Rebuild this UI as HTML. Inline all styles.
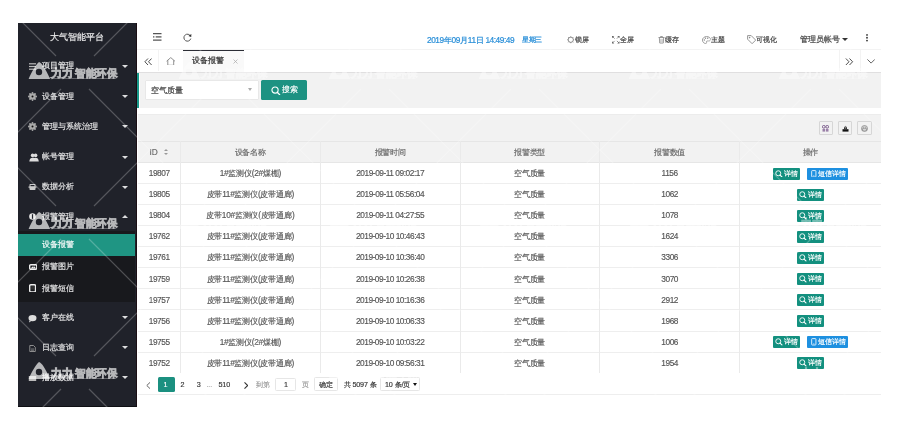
<!DOCTYPE html>
<html><head><meta charset="utf-8">
<style>
*{margin:0;padding:0;box-sizing:border-box}
html,body{width:900px;height:426px;overflow:hidden;background:#fff;font-family:"Liberation Sans",sans-serif;position:relative}
.a{position:absolute}
svg{display:block}
.side{left:18px;top:23px;width:118.5px;height:383.5px;background:#20222a;border-right:1.7px solid #1a0e14;border-bottom:1px solid #0e0f13;overflow:hidden}
.title{left:0;top:7px;width:117px;text-align:center;color:rgba(255,255,255,.85);font-size:8.6px;line-height:14px}
.mi{left:0;width:117px;height:30px;color:rgba(255,255,255,.8);font-size:7.5px;line-height:30px}
.mi .t,.ci .t{position:absolute;left:24px;top:0}
.sico{position:absolute;left:10px;width:9px;height:9px}
.tri{position:absolute;left:104px;top:13.5px;width:0;height:0;border-left:3.6px solid transparent;border-right:3.6px solid transparent;border-top:3.6px solid rgba(255,255,255,.85)}
.tri.up{border-top:0;border-bottom:3.6px solid rgba(255,255,255,.85);top:13px}
.child{left:0;top:208px;width:117px;height:70.5px;background:#18191d}
.ci{left:0;width:117px;height:22px;color:rgba(255,255,255,.8);font-size:7.5px;line-height:22px}
.ci.act{background:#1f9583;color:rgba(255,255,255,.92)}
.hdr{left:137px;top:23px;width:744px;height:26.5px;background:#fff;border-bottom:1px solid #f3f3f3}
.htxt{font-size:7.2px;color:#4a4a4a;line-height:12px;top:33.8px;white-space:nowrap}
.hic{position:absolute;top:35px;width:8px;height:8px}
.tabs{left:137px;top:49.5px;width:744px;height:23.5px;background:#fff;border-bottom:1px solid #e0dfe0}
.tdiv{position:absolute;top:50px;width:1px;height:21px;background:#f3f3f3}
.grey{left:140px;top:73px;width:741px;height:35px;background:#f2f2f2}
.gbar{left:136.5px;top:72.6px;width:2.5px;height:35.4px;background:#18998a}
.inp{left:145px;top:80.2px;width:114px;height:20px;background:#fff;border:1px solid #e8e8e8;border-radius:1px}
.btn{left:261.3px;top:80.2px;width:45.7px;height:20px;background:#1d9282;border-radius:1.5px;color:#fff;font-size:7.5px;line-height:20px}
.tool{left:138px;top:114px;width:743px;height:28px;background:#f2f2f2;border-top:1px solid #ececec;border-bottom:1px solid #e6e6e6}
.tb{position:absolute;top:121.2px;width:14.2px;height:14.3px;border:1px solid #d6d6d6;border-radius:1px;background:#f2f2f2}
.tb svg{position:absolute;left:2.6px;top:2.6px;width:7px;height:7px}
.thead{left:138px;top:142px;width:743px;height:21px;background:#f2f2f2;border-bottom:1px solid #e6e6e6}
.row{left:138px;width:743px;height:21.1px;border-bottom:1px solid #eee;background:#fff}
.cell{position:absolute;top:0;height:100%;text-align:center;font-size:7.5px;letter-spacing:-0.2px;color:#555;line-height:21px;white-space:nowrap}
.hcell{color:#666}
.vl{position:absolute;top:0;width:1px;height:100%;background:#e9e9e9}
.sort{display:inline-block;width:5px;height:6.2px;vertical-align:middle;position:relative;top:-0.8px;margin-left:4px}
.sort:before{content:"";position:absolute;left:0.5px;top:0;border-left:2px solid transparent;border-right:2px solid transparent;border-bottom:2.7px solid #999}
.sort:after{content:"";position:absolute;left:0.5px;bottom:0;border-left:2px solid transparent;border-right:2px solid transparent;border-top:2.7px solid #999}
.pag{left:138px;top:373.1px;width:743px;height:22.4px;border-bottom:1px solid #eee;background:#fff}
.ptxt{position:absolute;font-size:7.2px;letter-spacing:-0.15px;color:#333;line-height:14px;top:378.2px;white-space:nowrap}
.pbox{position:absolute;border:1px solid #e6e6e6;border-radius:1.5px;background:#fff}
.og{display:inline-block;position:relative;height:12px;line-height:12px;background:#13907f;color:#fff;font-size:6.6px;border-radius:1px;padding:0 2.5px 0 11px;vertical-align:middle;top:-0.5px}
.og .sic{position:absolute;left:2.2px;top:2px;width:7.6px;height:7.6px}
.ob{background:#1e90e0}
.wm{left:0;top:0;width:900px;height:426px;pointer-events:none}
.row{border-bottom:0}
.hl{left:138px;width:743px;height:1px;background:#eeeeee}
.cl{top:141px;width:1px;height:232.5px;background:#eaeaea}
.mi,.ci,.title{-webkit-text-stroke:0.2px currentColor}
.btn,.og,.cell,.ptxt{-webkit-text-stroke:0.15px currentColor}
.htxt{-webkit-text-stroke:0.22px currentColor}
.wrap{position:absolute;left:0;top:0;width:900px;height:426px;will-change:transform;transform:translateZ(0);}
.num{font-size:8.3px;letter-spacing:-0.45px}
.num2{font-size:8.3px;letter-spacing:-0.3px}
.hn{font-size:8.3px;letter-spacing:-0.45px}

</style></head><body><div class="wrap">
<!-- sidebar -->
<div class="a side">
  <div class="a title">大气智能平台</div>
  <div class="a mi" style="top:28px"><svg class="sico" style="top:11px" viewBox="0 0 9 9"><rect x="1" y="1.2" width="7" height="1.2" fill="#bbb"/><rect x="1" y="3.9" width="7" height="1.2" fill="#bbb"/><rect x="1" y="6.6" width="7" height="1.2" fill="#bbb"/></svg><span class="t">项目管理</span><span class="tri"></span></div>
  <div class="a mi" style="top:58.8px"><svg class="sico" style="top:10.7px" viewBox="0 0 9 9"><g fill="#aaa"><circle cx="4.5" cy="4.5" r="3.3"/><circle cx="4.5" cy="0.9" r="0.9"/><circle cx="4.5" cy="8.1" r="0.9"/><circle cx="0.9" cy="4.5" r="0.9"/><circle cx="8.1" cy="4.5" r="0.9"/><circle cx="2" cy="2" r="0.9"/><circle cx="7" cy="2" r="0.9"/><circle cx="2" cy="7" r="0.9"/><circle cx="7" cy="7" r="0.9"/></g><circle cx="4.5" cy="4.5" r="1" fill="#111"/></svg><span class="t">设备管理</span><span class="tri"></span></div>
  <div class="a mi" style="top:88.5px"><svg class="sico" style="top:10.7px" viewBox="0 0 9 9"><g fill="#aaa"><circle cx="4.5" cy="4.5" r="3.3"/><circle cx="4.5" cy="0.9" r="0.9"/><circle cx="4.5" cy="8.1" r="0.9"/><circle cx="0.9" cy="4.5" r="0.9"/><circle cx="8.1" cy="4.5" r="0.9"/><circle cx="2" cy="2" r="0.9"/><circle cx="7" cy="2" r="0.9"/><circle cx="2" cy="7" r="0.9"/><circle cx="7" cy="7" r="0.9"/></g><circle cx="4.5" cy="4.5" r="1" fill="#111"/></svg><span class="t">管理与系统治理</span><span class="tri"></span></div>
  <div class="a mi" style="top:119px"><svg class="sico" style="top:11px;left:10.5px;width:10px" viewBox="0 0 10 9"><g fill="#ddd"><circle cx="3.6" cy="2.4" r="1.8"/><circle cx="6.6" cy="2.4" r="1.8"/><path d="M0.3 8.6C0.6 5.6 1.8 4.8 3.6 4.8S6 5.2 6.6 4.8C8.4 4.8 9.6 5.6 9.8 8.6Z"/></g></svg><span class="t">帐号管理</span><span class="tri"></span></div>
  <div class="a mi" style="top:149.2px"><svg class="sico" style="top:11px" viewBox="0 0 9 9"><g fill="#ccc"><rect x="1.5" y="1" width="6" height="6" rx="0.8"/><rect x="0.5" y="3.5" width="8" height="1.2"/></g><rect x="2.5" y="2" width="4" height="1.2" fill="#20222a"/></svg><span class="t">数据分析</span><span class="tri"></span></div>
  <div class="a mi" style="top:178.8px"><svg class="sico" style="top:11.5px;left:10.5px;width:7px;height:7px" viewBox="0 0 7 7"><ellipse cx="3.5" cy="3.5" rx="3.3" ry="3.2" fill="#e8e8e8"/><rect x="2.9" y="1.2" width="1.2" height="4.6" fill="#20222a"/></svg><span class="t">报警管理</span><span class="tri up"></span></div>
  <div class="a child">
    <div class="a ci act" style="top:2.7px"><span class="t">设备报警</span></div>
    <div class="a ci" style="top:25.4px"><svg class="sico" style="top:7.4px;left:10.5px;width:8.5px;height:6px" viewBox="0 0 8.5 6"><rect x="0.7" y="0.7" width="7.1" height="4.6" rx="1.1" fill="none" stroke="#eee" stroke-width="1.4"/><path d="M1.8 4.4L3.4 2.6L4.6 3.6L5.8 2.4L6.8 4.4Z" fill="#eee"/></svg><span class="t">报警图片</span></div>
    <div class="a ci" style="top:46.7px"><svg class="sico" style="top:6.2px;left:10.9px;width:7.2px;height:8.6px" viewBox="0 0 7.2 8.6"><rect x="0.7" y="0.7" width="5.8" height="7.2" rx="1.1" fill="none" stroke="#eee" stroke-width="1.4"/><rect x="2.2" y="2" width="2.8" height="3.6" fill="#333"/></svg><span class="t">报警短信</span></div>
  </div>
  <div class="a mi" style="top:279.5px"><svg class="sico" style="top:11px" viewBox="0 0 9 8"><ellipse cx="4.5" cy="3.6" rx="4" ry="3.2" fill="#ddd"/><path d="M1.5 6L1 8L3.2 6.6Z" fill="#ddd"/></svg><span class="t">客户在线</span><span class="tri"></span></div>
  <div class="a mi" style="top:309.5px"><svg class="sico" style="top:11.5px;width:7px;left:11px" viewBox="0 0 7 7"><path d="M0.8 0.5H4.5L6.3 2.3V6.5H0.8Z" fill="none" stroke="#999" stroke-width="0.9"/><path d="M2 4H5M2 5.3H5" stroke="#999" stroke-width="0.7"/></svg><span class="t">日志查询</span><span class="tri"></span></div>
  <div class="a mi" style="top:339.5px"><svg class="sico" style="top:11px" viewBox="0 0 9 9"><rect x="0.8" y="2" width="7.4" height="5" fill="#bbb"/></svg><span class="t">播放数据</span><span class="tri"></span></div>
</div>

<!-- header -->
<div class="a hdr"></div>
<svg class="a" style="left:153px;top:33.3px;width:8.5px;height:7.8px" viewBox="0 0 8.5 7.8"><g fill="#555"><rect x="0" y="0" width="8.5" height="1.25"/><rect x="0" y="3.25" width="1.4" height="1.3"/><rect x="2.7" y="3.25" width="5.8" height="1.3"/><rect x="0" y="6.5" width="8.5" height="1.25"/></g></svg>
<svg class="a" style="left:183px;top:33px;width:9px;height:9px" viewBox="0 0 9 9"><path d="M7.6 3.2A3.5 3.5 0 1 0 7.8 5.6" fill="none" stroke="#555" stroke-width="1"/><path d="M8.4 0.9L8.2 4L5.4 3Z" fill="#333"/></svg>
<div class="a htxt" style="left:427px;color:#2a8fd8;font-size:7.5px;letter-spacing:-0.1px"><span class="hn">2019</span>年<span class="hn">09</span>月<span class="hn">11</span>日 <span class="hn">14:49:49</span></div>
<div class="a htxt" style="left:522px;color:#2a8fd8;letter-spacing:-0.4px">星期三</div>
<svg class="a" style="left:566.7px;top:36px;width:7.5px;height:7.5px" viewBox="0 0 8 8"><circle cx="4" cy="4" r="2.8" fill="none" stroke="#8a8a8a" stroke-width="1"/><path d="M4 0.3V1.6M4 6.4V7.7M0.3 4H1.6M6.4 4H7.7M1.3 1.3L2.2 2.2M5.8 5.8L6.7 6.7M6.7 1.3L5.8 2.2M1.3 6.7L2.2 5.8" stroke="#8a8a8a" stroke-width="0.9"/></svg>
<div class="a htxt" style="left:575.3px">锁屏</div>
<svg class="a" style="left:612px;top:36px;width:7.5px;height:7.5px" viewBox="0 0 8 8"><path d="M0.5 0.5L2.8 2.8M7.5 0.5L5.2 2.8M0.5 7.5L2.8 5.2M7.5 7.5L5.2 5.2" stroke="#8a8a8a" stroke-width="1"/><g fill="#666"><path d="M0 0H2.4L0 2.4Z"/><path d="M8 0V2.4L5.6 0Z"/><path d="M0 8V5.6L2.4 8Z"/><path d="M8 8H5.6L8 5.6Z"/></g></svg>
<div class="a htxt" style="left:620.3px">全屏</div>
<svg class="a" style="left:657.5px;top:36px;width:7px;height:7.5px" viewBox="0 0 7 8"><path d="M0.3 1.6H6.7M2.5 1.6V0.5H4.5V1.6M1.2 1.6L1.6 7.5H5.4L5.8 1.6" fill="none" stroke="#8a8a8a" stroke-width="0.9"/><path d="M2.8 3V6.4M4.2 3V6.4" stroke="#8a8a8a" stroke-width="0.6"/></svg>
<div class="a htxt" style="left:665.3px">缓存</div>
<svg class="a" style="left:701.7px;top:35.5px;width:9px;height:8px" viewBox="0 0 9 8"><path d="M4.5 0.6C2.2 0.6 0.5 2.2 0.5 4.1C0.5 6.2 2.2 7.5 3.8 7.5C4.6 7.5 4.8 6.9 4.5 6.3C4.2 5.6 4.6 5 5.4 5H6.6C7.8 5 8.5 4.2 8.5 3.3C8.5 1.7 6.8 0.6 4.5 0.6Z" fill="none" stroke="#8a8a8a" stroke-width="0.9"/><circle cx="2.4" cy="4" r="0.7" fill="#8a8a8a"/><circle cx="3.5" cy="2.3" r="0.7" fill="#8a8a8a"/><circle cx="5.7" cy="2.3" r="0.7" fill="#8a8a8a"/></svg>
<div class="a htxt" style="left:711px">主题</div>
<svg class="a" style="left:747px;top:35px;width:9.3px;height:9px" viewBox="0 0 9.3 9"><path d="M0.6 0.6H4.2L8.7 5.1L5.1 8.7L0.6 4.2Z" fill="none" stroke="#8a8a8a" stroke-width="0.9" stroke-linejoin="round"/><circle cx="2.6" cy="2.6" r="0.8" fill="#8a8a8a"/></svg>
<div class="a htxt" style="left:756.3px">可视化</div>
<div class="a htxt" style="left:800px;font-size:7.5px;top:33.5px">管理员帐号</div>
<div class="a" style="left:842px;top:37.8px;width:0;height:0;border-left:3.2px solid transparent;border-right:3.2px solid transparent;border-top:3.4px solid #333"></div>
<svg class="a" style="left:865.5px;top:34px;width:2px;height:7.5px" viewBox="0 0 2 7.5"><g fill="#333"><circle cx="1" cy="0.9" r="0.9"/><circle cx="1" cy="3.75" r="0.9"/><circle cx="1" cy="6.6" r="0.9"/></g></svg>

<!-- tabs -->
<div class="a tabs"></div>
<div class="tdiv" style="left:158px"></div>
<div class="tdiv" style="left:839px"></div>
<div class="tdiv" style="left:859.5px"></div>
<div class="a" style="left:183.3px;top:50px;width:60.6px;height:21.5px;background:#f9f9f9;border-top:1.6px solid #2b2d35"></div>
<svg class="a" style="left:143.5px;top:57.5px;width:8.5px;height:7.5px" viewBox="0 0 8.5 7.5"><path d="M4 0.5L0.9 3.75L4 7M7.6 0.5L4.5 3.75L7.6 7" fill="none" stroke="#3a3a3a" stroke-width="0.9"/></svg>
<svg class="a" style="left:166px;top:56.5px;width:9.5px;height:8.8px" viewBox="0 0 9.5 8.8"><path d="M0.6 4.2L4.75 0.6L8.9 4.2M1.8 3.2V8.3H7.7V3.2" fill="none" stroke="#8a8a8a" stroke-width="0.95" stroke-linejoin="round"/></svg>
<div class="a htxt" style="left:191.7px;top:54.6px;color:#333;font-size:7.5px">设备报警</div>
<svg class="a" style="left:233px;top:58.7px;width:5px;height:5px" viewBox="0 0 5 5"><path d="M0.5 0.5L4.5 4.5M4.5 0.5L0.5 4.5" stroke="#aaa" stroke-width="0.7"/></svg>
<svg class="a" style="left:845.3px;top:57.5px;width:8.5px;height:7.5px" viewBox="0 0 8.5 7.5"><path d="M0.9 0.5L4 3.75L0.9 7M4.5 0.5L7.6 3.75L4.5 7" fill="none" stroke="#3a3a3a" stroke-width="0.9"/></svg>
<svg class="a" style="left:866.8px;top:59px;width:8.2px;height:4.6px" viewBox="0 0 8.2 4.6"><path d="M0.4 0.4L4.1 4.1L7.8 0.4" fill="none" stroke="#555" stroke-width="0.9"/></svg>

<!-- search -->
<div class="a grey"></div>
<div class="a gbar"></div>
<div class="a inp"></div>
<div class="a htxt" style="left:151px;top:85px;font-size:7.5px">空气质量</div>
<div class="a" style="left:248px;top:88.2px;width:0;height:0;border-left:2.7px solid transparent;border-right:2.7px solid transparent;border-top:3.2px solid #aaa"></div>
<div class="a btn"><svg style="position:absolute;left:10px;top:5.8px;width:9.4px;height:9.4px" viewBox="0 0 10 10"><circle cx="4.3" cy="4.3" r="3.3" fill="none" stroke="#fff" stroke-width="1.2"/><path d="M6.6 6.6L9.2 9.2" stroke="#fff" stroke-width="1.4" stroke-linecap="round"/></svg><span style="position:absolute;left:21px;top:0">搜索</span></div>

<!-- toolbar -->
<div class="a tool"></div>
<div class="tb" style="left:818.6px"><svg viewBox="0 0 7 7"><g fill="none" stroke="#7a5a8a" stroke-width="1"><rect x="0.5" y="0.5" width="2.6" height="2.6" rx="1"/><rect x="3.9" y="0.5" width="2.6" height="2.6" rx="1"/></g><g fill="#9a80a8"><rect x="0.5" y="4" width="2.6" height="2.6"/><rect x="3.9" y="4" width="2.6" height="2.6"/></g></svg></div>
<div class="tb" style="left:838px"><svg viewBox="0 0 7 7"><path d="M0.5 4.2H6.5V6.6H0.5Z" fill="#111"/><path d="M2 4.2V2.4L3.5 0.8L5 2.4V4.2Z" fill="#333"/><path d="M3.5 1.2V3.6" stroke="#fff" stroke-width="0.4"/></svg></div>
<div class="tb" style="left:857.4px"><svg viewBox="0 0 7 7"><circle cx="3.5" cy="3.5" r="3" fill="none" stroke="#777" stroke-width="0.7"/><path d="M1.4 3.6H5.6V5.2H1.4Z" fill="none" stroke="#777" stroke-width="0.6"/><path d="M2.2 3.6V2H4.8V3.6" fill="none" stroke="#777" stroke-width="0.6"/></svg></div>

<!-- table -->
<div class="a thead"><div class="cell hcell" style="left:0.0px;width:42.3px"><span class="num" style="letter-spacing:0">ID</span> <span class="sort"></span></div><div class="cell hcell" style="left:42.3px;width:140.0px">设备名称</div><div class="cell hcell" style="left:182.3px;width:139.7px">报警时间</div><div class="cell hcell" style="left:322.0px;width:139.3px">报警类型</div><div class="cell hcell" style="left:461.3px;width:140.7px">报警数值</div><div class="cell hcell" style="left:602.0px;width:141.0px">操作</div></div>
<div class="a row" style="top:163.0px"><div class="cell" style="left:0.0px;width:42.3px"><span class="num">19807</span></div><div class="cell" style="left:42.3px;width:140.0px"><span class="num2">1#</span>监测仪<span class="num2">(2#</span>煤棚<span class="num2">)</span></div><div class="cell" style="left:182.3px;width:139.7px"><span class="num">2019-09-11 09:02:17</span></div><div class="cell" style="left:322.0px;width:139.3px">空气质量</div><div class="cell" style="left:461.3px;width:140.7px"><span class="num">1156</span></div><div class="cell" style="left:602.0px;width:141.0px"><span class="og"><svg class="sic" viewBox="0 0 10 10"><circle cx="4.3" cy="4.3" r="3.3" fill="none" stroke="#fff" stroke-width="1.2"/><path d="M6.6 6.6L9.2 9.2" stroke="#fff" stroke-width="1.4" stroke-linecap="round"/></svg>详情</span><span class="og ob" style="margin-left:7.5px"><svg class="sic" viewBox="0 0 10 10"><rect x="2.2" y="0.8" width="5.6" height="8.4" rx="0.9" fill="none" stroke="#fff" stroke-width="1.1"/><path d="M4.2 7.6h1.6" stroke="#fff" stroke-width="0.8"/></svg>短信详情</span></div></div><div class="a row" style="top:184.1px"><div class="cell" style="left:0.0px;width:42.3px"><span class="num">19805</span></div><div class="cell" style="left:42.3px;width:140.0px">皮带<span class="num2">11#</span>监测仪<span class="num2">(</span>皮带通廊<span class="num2">)</span></div><div class="cell" style="left:182.3px;width:139.7px"><span class="num">2019-09-11 05:56:04</span></div><div class="cell" style="left:322.0px;width:139.3px">空气质量</div><div class="cell" style="left:461.3px;width:140.7px"><span class="num">1062</span></div><div class="cell" style="left:602.0px;width:141.0px"><span class="og"><svg class="sic" viewBox="0 0 10 10"><circle cx="4.3" cy="4.3" r="3.3" fill="none" stroke="#fff" stroke-width="1.2"/><path d="M6.6 6.6L9.2 9.2" stroke="#fff" stroke-width="1.4" stroke-linecap="round"/></svg>详情</span></div></div><div class="a row" style="top:205.2px"><div class="cell" style="left:0.0px;width:42.3px"><span class="num">19804</span></div><div class="cell" style="left:42.3px;width:140.0px">皮带<span class="num2">10#</span>监测仪<span class="num2">(</span>皮带通廊<span class="num2">)</span></div><div class="cell" style="left:182.3px;width:139.7px"><span class="num">2019-09-11 04:27:55</span></div><div class="cell" style="left:322.0px;width:139.3px">空气质量</div><div class="cell" style="left:461.3px;width:140.7px"><span class="num">1078</span></div><div class="cell" style="left:602.0px;width:141.0px"><span class="og"><svg class="sic" viewBox="0 0 10 10"><circle cx="4.3" cy="4.3" r="3.3" fill="none" stroke="#fff" stroke-width="1.2"/><path d="M6.6 6.6L9.2 9.2" stroke="#fff" stroke-width="1.4" stroke-linecap="round"/></svg>详情</span></div></div><div class="a row" style="top:226.3px"><div class="cell" style="left:0.0px;width:42.3px"><span class="num">19762</span></div><div class="cell" style="left:42.3px;width:140.0px">皮带<span class="num2">11#</span>监测仪<span class="num2">(</span>皮带通廊<span class="num2">)</span></div><div class="cell" style="left:182.3px;width:139.7px"><span class="num">2019-09-10 10:46:43</span></div><div class="cell" style="left:322.0px;width:139.3px">空气质量</div><div class="cell" style="left:461.3px;width:140.7px"><span class="num">1624</span></div><div class="cell" style="left:602.0px;width:141.0px"><span class="og"><svg class="sic" viewBox="0 0 10 10"><circle cx="4.3" cy="4.3" r="3.3" fill="none" stroke="#fff" stroke-width="1.2"/><path d="M6.6 6.6L9.2 9.2" stroke="#fff" stroke-width="1.4" stroke-linecap="round"/></svg>详情</span></div></div><div class="a row" style="top:247.4px"><div class="cell" style="left:0.0px;width:42.3px"><span class="num">19761</span></div><div class="cell" style="left:42.3px;width:140.0px">皮带<span class="num2">11#</span>监测仪<span class="num2">(</span>皮带通廊<span class="num2">)</span></div><div class="cell" style="left:182.3px;width:139.7px"><span class="num">2019-09-10 10:36:40</span></div><div class="cell" style="left:322.0px;width:139.3px">空气质量</div><div class="cell" style="left:461.3px;width:140.7px"><span class="num">3306</span></div><div class="cell" style="left:602.0px;width:141.0px"><span class="og"><svg class="sic" viewBox="0 0 10 10"><circle cx="4.3" cy="4.3" r="3.3" fill="none" stroke="#fff" stroke-width="1.2"/><path d="M6.6 6.6L9.2 9.2" stroke="#fff" stroke-width="1.4" stroke-linecap="round"/></svg>详情</span></div></div><div class="a row" style="top:268.5px"><div class="cell" style="left:0.0px;width:42.3px"><span class="num">19759</span></div><div class="cell" style="left:42.3px;width:140.0px">皮带<span class="num2">11#</span>监测仪<span class="num2">(</span>皮带通廊<span class="num2">)</span></div><div class="cell" style="left:182.3px;width:139.7px"><span class="num">2019-09-10 10:26:38</span></div><div class="cell" style="left:322.0px;width:139.3px">空气质量</div><div class="cell" style="left:461.3px;width:140.7px"><span class="num">3070</span></div><div class="cell" style="left:602.0px;width:141.0px"><span class="og"><svg class="sic" viewBox="0 0 10 10"><circle cx="4.3" cy="4.3" r="3.3" fill="none" stroke="#fff" stroke-width="1.2"/><path d="M6.6 6.6L9.2 9.2" stroke="#fff" stroke-width="1.4" stroke-linecap="round"/></svg>详情</span></div></div><div class="a row" style="top:289.6px"><div class="cell" style="left:0.0px;width:42.3px"><span class="num">19757</span></div><div class="cell" style="left:42.3px;width:140.0px">皮带<span class="num2">11#</span>监测仪<span class="num2">(</span>皮带通廊<span class="num2">)</span></div><div class="cell" style="left:182.3px;width:139.7px"><span class="num">2019-09-10 10:16:36</span></div><div class="cell" style="left:322.0px;width:139.3px">空气质量</div><div class="cell" style="left:461.3px;width:140.7px"><span class="num">2912</span></div><div class="cell" style="left:602.0px;width:141.0px"><span class="og"><svg class="sic" viewBox="0 0 10 10"><circle cx="4.3" cy="4.3" r="3.3" fill="none" stroke="#fff" stroke-width="1.2"/><path d="M6.6 6.6L9.2 9.2" stroke="#fff" stroke-width="1.4" stroke-linecap="round"/></svg>详情</span></div></div><div class="a row" style="top:310.7px"><div class="cell" style="left:0.0px;width:42.3px"><span class="num">19756</span></div><div class="cell" style="left:42.3px;width:140.0px">皮带<span class="num2">11#</span>监测仪<span class="num2">(</span>皮带通廊<span class="num2">)</span></div><div class="cell" style="left:182.3px;width:139.7px"><span class="num">2019-09-10 10:06:33</span></div><div class="cell" style="left:322.0px;width:139.3px">空气质量</div><div class="cell" style="left:461.3px;width:140.7px"><span class="num">1968</span></div><div class="cell" style="left:602.0px;width:141.0px"><span class="og"><svg class="sic" viewBox="0 0 10 10"><circle cx="4.3" cy="4.3" r="3.3" fill="none" stroke="#fff" stroke-width="1.2"/><path d="M6.6 6.6L9.2 9.2" stroke="#fff" stroke-width="1.4" stroke-linecap="round"/></svg>详情</span></div></div><div class="a row" style="top:331.8px"><div class="cell" style="left:0.0px;width:42.3px"><span class="num">19755</span></div><div class="cell" style="left:42.3px;width:140.0px"><span class="num2">1#</span>监测仪<span class="num2">(2#</span>煤棚<span class="num2">)</span></div><div class="cell" style="left:182.3px;width:139.7px"><span class="num">2019-09-10 10:03:22</span></div><div class="cell" style="left:322.0px;width:139.3px">空气质量</div><div class="cell" style="left:461.3px;width:140.7px"><span class="num">1006</span></div><div class="cell" style="left:602.0px;width:141.0px"><span class="og"><svg class="sic" viewBox="0 0 10 10"><circle cx="4.3" cy="4.3" r="3.3" fill="none" stroke="#fff" stroke-width="1.2"/><path d="M6.6 6.6L9.2 9.2" stroke="#fff" stroke-width="1.4" stroke-linecap="round"/></svg>详情</span><span class="og ob" style="margin-left:7.5px"><svg class="sic" viewBox="0 0 10 10"><rect x="2.2" y="0.8" width="5.6" height="8.4" rx="0.9" fill="none" stroke="#fff" stroke-width="1.1"/><path d="M4.2 7.6h1.6" stroke="#fff" stroke-width="0.8"/></svg>短信详情</span></div></div><div class="a row" style="top:352.9px"><div class="cell" style="left:0.0px;width:42.3px"><span class="num">19752</span></div><div class="cell" style="left:42.3px;width:140.0px">皮带<span class="num2">11#</span>监测仪<span class="num2">(</span>皮带通廊<span class="num2">)</span></div><div class="cell" style="left:182.3px;width:139.7px"><span class="num">2019-09-10 09:56:31</span></div><div class="cell" style="left:322.0px;width:139.3px">空气质量</div><div class="cell" style="left:461.3px;width:140.7px"><span class="num">1954</span></div><div class="cell" style="left:602.0px;width:141.0px"><span class="og"><svg class="sic" viewBox="0 0 10 10"><circle cx="4.3" cy="4.3" r="3.3" fill="none" stroke="#fff" stroke-width="1.2"/><path d="M6.6 6.6L9.2 9.2" stroke="#fff" stroke-width="1.4" stroke-linecap="round"/></svg>详情</span></div></div><div class="a hl" style="top:183px"></div><div class="a hl" style="top:204px"></div><div class="a hl" style="top:225px"></div><div class="a hl" style="top:246px"></div><div class="a hl" style="top:267px"></div><div class="a hl" style="top:288px"></div><div class="a hl" style="top:309px"></div><div class="a hl" style="top:331px"></div><div class="a hl" style="top:352px"></div><div class="a hl" style="top:373px"></div><div class="a cl" style="left:180.0px"></div><div class="a cl" style="left:320.0px"></div><div class="a cl" style="left:459.5px"></div><div class="a cl" style="left:599.0px"></div><div class="a cl" style="left:739.0px"></div>

<!-- pagination -->
<div class="a pag"></div>
<svg class="a" style="left:146.3px;top:381.5px;width:4.5px;height:7px" viewBox="0 0 4.5 7"><path d="M4 0.4L0.8 3.5L4 6.6" fill="none" stroke="#666" stroke-width="1"/></svg>
<div class="a" style="left:158.3px;top:377.4px;width:16.6px;height:14.3px;background:#1b9080;border-radius:1.5px"></div>
<div class="ptxt" style="left:163.5px;color:#fff">1</div>
<div class="ptxt" style="left:180.5px">2</div>
<div class="ptxt" style="left:196.7px">3</div>
<div class="ptxt" style="left:206.5px;color:#999">...</div>
<div class="ptxt" style="left:218.5px">510</div>
<svg class="a" style="left:243.9px;top:381.5px;width:4.5px;height:7px" viewBox="0 0 4.5 7"><path d="M0.5 0.4L3.7 3.5L0.5 6.6" fill="none" stroke="#333" stroke-width="1.1"/></svg>
<div class="ptxt" style="left:256px;color:#999">到第</div>
<div class="pbox" style="left:275px;top:377.6px;width:21.4px;height:13.7px"></div>
<div class="ptxt" style="left:284px">1</div>
<div class="ptxt" style="left:301.5px;color:#999">页</div>
<div class="pbox" style="left:313.7px;top:377.3px;width:24.6px;height:14px"></div>
<div class="ptxt" style="left:319.4px">确定</div>
<div class="ptxt" style="left:343.7px">共 5097 条</div>
<div class="pbox" style="left:380.3px;top:377.3px;width:40px;height:14px"></div>
<div class="ptxt" style="left:385px">10 条/页</div>
<div class="a" style="left:413.3px;top:383.3px;width:0;height:0;border-left:2.2px solid transparent;border-right:2.2px solid transparent;border-top:3.6px solid #111"></div>

<!-- watermark -->
<svg class="a wm" viewBox="0 0 900 426" width="900" height="426">
 <defs>
  <pattern id="wmp" x="0" y="0" width="150" height="150" patternUnits="userSpaceOnUse">
   <g stroke="rgba(255,255,255,0.24)" stroke-width="1.2">
    <path d="M0 0L56 56M89 89L150 150M150 0L94 56M61 89L0 150"/>
   </g>
   <g fill="#fff" opacity="0.68">
    <path fill-rule="evenodd" d="M39 62C41.5 62.5 45.5 68.5 50.1 79H28.6C31.5 72.5 35.5 65 39 62ZM39 68.8A3.2 3.2 0 1 0 39 75.2A3.2 3.2 0 1 0 39 68.8Z"/>
    <text x="51" y="76.6" font-size="11.2" font-weight="bold" stroke="#fff" stroke-width="0.8" textLength="22" lengthAdjust="spacingAndGlyphs">力力</text>
    <text x="75" y="76.6" font-size="11" font-weight="bold" stroke="#fff" stroke-width="0.6" textLength="42" lengthAdjust="spacingAndGlyphs">智能环保</text>
    <rect x="52.8" y="78" width="63.5" height="0.9" opacity="0.5"/>
   </g>
  </pattern>
  <pattern id="wmq" x="0" y="0" width="150" height="150" patternUnits="userSpaceOnUse">
   <g stroke="rgba(255,255,255,0.24)" stroke-width="1.2">
    <path d="M0 0L56 56M89 89L150 150M150 0L94 56M61 89L0 150"/>
   </g>
   <g fill="#fff" opacity="0.42">
    <path fill-rule="evenodd" d="M39 62C41.5 62.5 45.5 68.5 50.1 79H28.6C31.5 72.5 35.5 65 39 62ZM39 68.8A3.2 3.2 0 1 0 39 75.2A3.2 3.2 0 1 0 39 68.8Z"/>
    <text x="51" y="76.6" font-size="11.2" font-weight="bold" stroke="#fff" stroke-width="0.8" textLength="22" lengthAdjust="spacingAndGlyphs">力力</text>
    <text x="75" y="76.6" font-size="11" font-weight="bold" stroke="#fff" stroke-width="0.6" textLength="42" lengthAdjust="spacingAndGlyphs">智能环保</text>
    <rect x="52.8" y="78" width="63.5" height="0.9" opacity="0.5"/>
   </g>
  </pattern>
 </defs>
 <rect x="18" y="23" width="118.5" height="384" fill="url(#wmp)"/>
 <path d="M0 0H900V426H0ZM18 23V407H136.5V23Z" fill-rule="evenodd" fill="url(#wmq)"/>
</svg>

</div></body></html>
